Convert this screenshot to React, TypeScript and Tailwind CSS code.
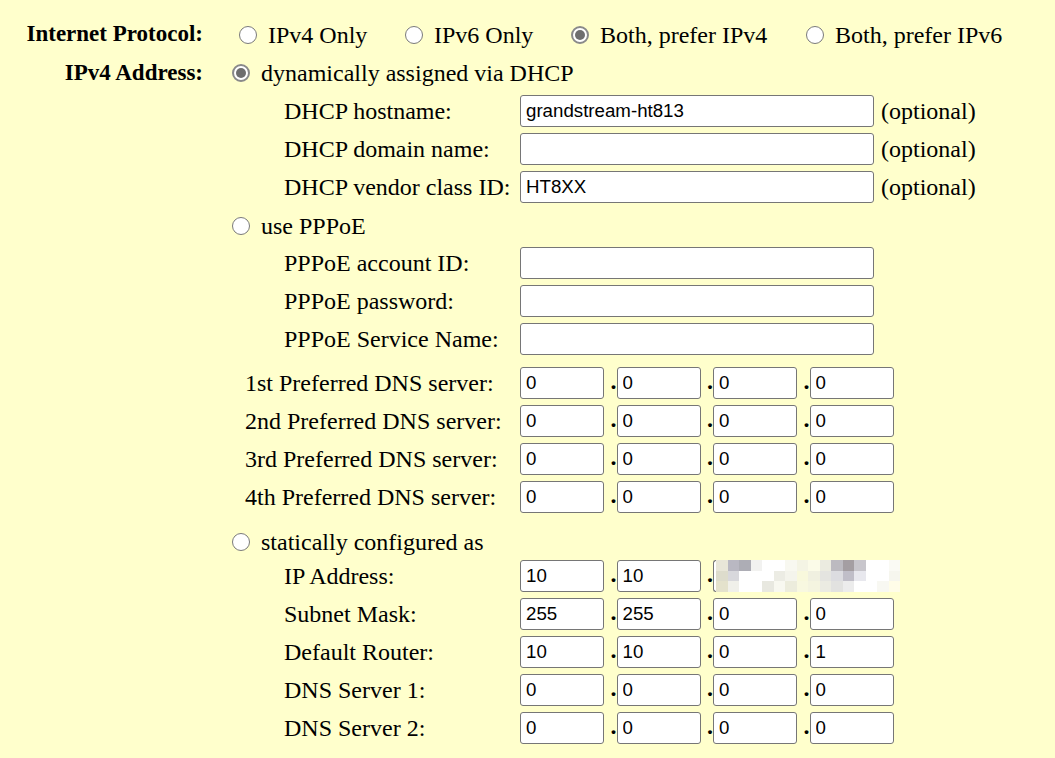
import React from 'react';

type Option = { label: string; checked?: boolean; width: string };

const protocols: Option[] = [
  { label: 'IPv4 Only', width: 'w-[166px]' },
  { label: 'IPv6 Only', width: 'w-[166px]' },
  { label: 'Both, prefer IPv4', checked: true, width: 'w-[235px]' },
  { label: 'Both, prefer IPv6', width: '' },
];

const dhcpFields = [
  { label: 'DHCP hostname:', value: 'grandstream-ht813' },
  { label: 'DHCP domain name:', value: '' },
  { label: 'DHCP vendor class ID:', value: 'HT8XX' },
];

const pppoeFields = ['PPPoE account ID:', 'PPPoE password:', 'PPPoE Service Name:'];

const dnsServers = [
  '1st Preferred DNS server:',
  '2nd Preferred DNS server:',
  '3rd Preferred DNS server:',
  '4th Preferred DNS server:',
];

const staticFields: { label: string; octets: string[] }[] = [
  { label: 'Subnet Mask:', octets: ['255', '255', '0', '0'] },
  { label: 'Default Router:', octets: ['10', '10', '0', '1'] },
  { label: 'DNS Server 1:', octets: ['0', '0', '0', '0'] },
  { label: 'DNS Server 2:', octets: ['0', '0', '0', '0'] },
];

// masked octets of the static address
const mosaic = [
  ['#e8e6d8', '#b9b8c2', '#adadb5', '#f2f2f0', '#ffffff', '#ffffff', '#f8f8f0', '#f4f4e4', '#fbfbe8', '#ebebe0', '#bcbac0', '#a49ea2', '#c8c6cc', '#ffffff', '#ffffff', '#fafaf4'],
  ['#dddccc', '#d8d8dc', '#ffffff', '#ffffff', '#ffffff', '#ecece4', '#f4f4ec', '#f8f8dc', '#f0f0e0', '#e4e4e0', '#dcdce0', '#c0bec8', '#e8e8ee', '#ffffff', '#ffffff', '#f6f6ee'],
  ['#e4e2cc', '#f0f0ea', '#ffffff', '#ffffff', '#e8e8e0', '#f8f8f0', '#ececdc', '#f8f8e0', '#f4f4e0', '#ebebe2', '#e2e2e0', '#ececec', '#ffffff', '#ffffff', '#f8f8f2', '#fffde8'],
];

function Radio({ checked = false }: { checked?: boolean }) {
  return (
    <span
      className={
        checked
          ? 'flex h-[18px] w-[18px] shrink-0 items-center justify-center rounded-full border-2 border-[#8a8a8a] bg-white'
          : 'flex h-[18px] w-[18px] shrink-0 items-center justify-center rounded-full border border-[#7a7a7a] bg-white'
      }
    >
      {checked && <span className="h-[10px] w-[10px] rounded-full bg-[#6e6e6e]" />}
    </span>
  );
}

function TextBox({ value = '', width = 'w-[354px]' }: { value?: string; width?: string }) {
  return (
    <input
      readOnly
      value={value}
      className={`${width} h-[32px] rounded-[3px] border border-[#767676] bg-white pl-[5px] font-['Liberation_Sans',Arial,sans-serif] text-[18.7px] text-black outline-none`}
    />
  );
}

function Dot() {
  return <span className="w-[12.5px] text-right font-bold leading-none">.</span>;
}

function IpBoxes({ octets }: { octets: string[] }) {
  return (
    <div className="flex items-baseline">
      {octets.map((o, i) => (
        <React.Fragment key={i}>
          {i > 0 && <Dot />}
          <TextBox value={o} width="w-[84px]" />
        </React.Fragment>
      ))}
    </div>
  );
}

function RadioLine({ label, checked = false }: { label: string; checked?: boolean }) {
  return (
    <div className="flex items-center gap-[11px]">
      <Radio checked={checked} />
      <span>{label}</span>
    </div>
  );
}

export default function App() {
  return (
    <div className="min-h-screen bg-[#ffffcc] pt-[15px] font-['Liberation_Serif','Times_New_Roman',serif] text-[24px] leading-tight text-black">
      {/* Internet Protocol */}
      <div className="flex h-[39px] items-center">
        <div className="w-[211px] pr-[8px] text-right text-[23px] font-bold">Internet Protocol:</div>
        <div className="ml-[28px] flex items-center">
          {protocols.map((p) => (
            <div key={p.label} className={`${p.width} flex items-center gap-[11px]`}>
              <Radio checked={p.checked} />
              <span>{p.label}</span>
            </div>
          ))}
        </div>
      </div>

      {/* IPv4 Address */}
      <div className="flex">
        <div className="flex h-[38px] w-[211px] items-center justify-end pr-[8px] text-[23px] font-bold">IPv4 Address:</div>
        <div className="ml-[21px] flex flex-col">
          <div className="flex h-[38px] items-center">
            <RadioLine label="dynamically assigned via DHCP" checked />
          </div>
          {dhcpFields.map((f) => (
            <div key={f.label} className="flex h-[38px] items-center pl-[52px]">
              <span className="w-[236px]">{f.label}</span>
              <TextBox value={f.value} />
              <span className="ml-[7px]">(optional)</span>
            </div>
          ))}

          <div className="flex h-[38px] items-center pt-[2px]">
            <RadioLine label="use PPPoE" />
          </div>
          {pppoeFields.map((label) => (
            <div key={label} className="flex h-[38px] items-center pl-[52px]">
              <span className="w-[236px]">{label}</span>
              <TextBox />
            </div>
          ))}

          <div className="mt-[6px] flex flex-col">
            {dnsServers.map((label) => (
              <div key={label} className="flex h-[38px] items-center pl-[13px]">
                <span className="w-[275px]">{label}</span>
                <IpBoxes octets={['0', '0', '0', '0']} />
              </div>
            ))}
          </div>

          <div className="mt-[11px] flex h-[30px] items-center">
            <RadioLine label="statically configured as" />
          </div>

          <div className="flex h-[38px] items-center pl-[52px]">
            <span className="w-[236px]">IP Address:</span>
            <div className="flex items-baseline">
              <TextBox value="10" width="w-[84px]" />
              <Dot />
              <TextBox value="10" width="w-[84px]" />
              <Dot />
              <div className="flex h-[32px] self-center">
                <span className="w-[3px] rounded-l-[3px] border-y border-l border-[#767676] bg-white" />
                <div className="grid grid-cols-[repeat(16,11.5px)] grid-rows-[11px_10px_11px]">
                  {mosaic.flat().map((c, i) => (
                    <span key={i} style={{ background: c }} />
                  ))}
                </div>
              </div>
            </div>
          </div>
          {staticFields.map((f) => (
            <div key={f.label} className="flex h-[38px] items-center pl-[52px]">
              <span className="w-[236px]">{f.label}</span>
              <IpBoxes octets={f.octets} />
            </div>
          ))}
        </div>
      </div>
    </div>
  );
}
